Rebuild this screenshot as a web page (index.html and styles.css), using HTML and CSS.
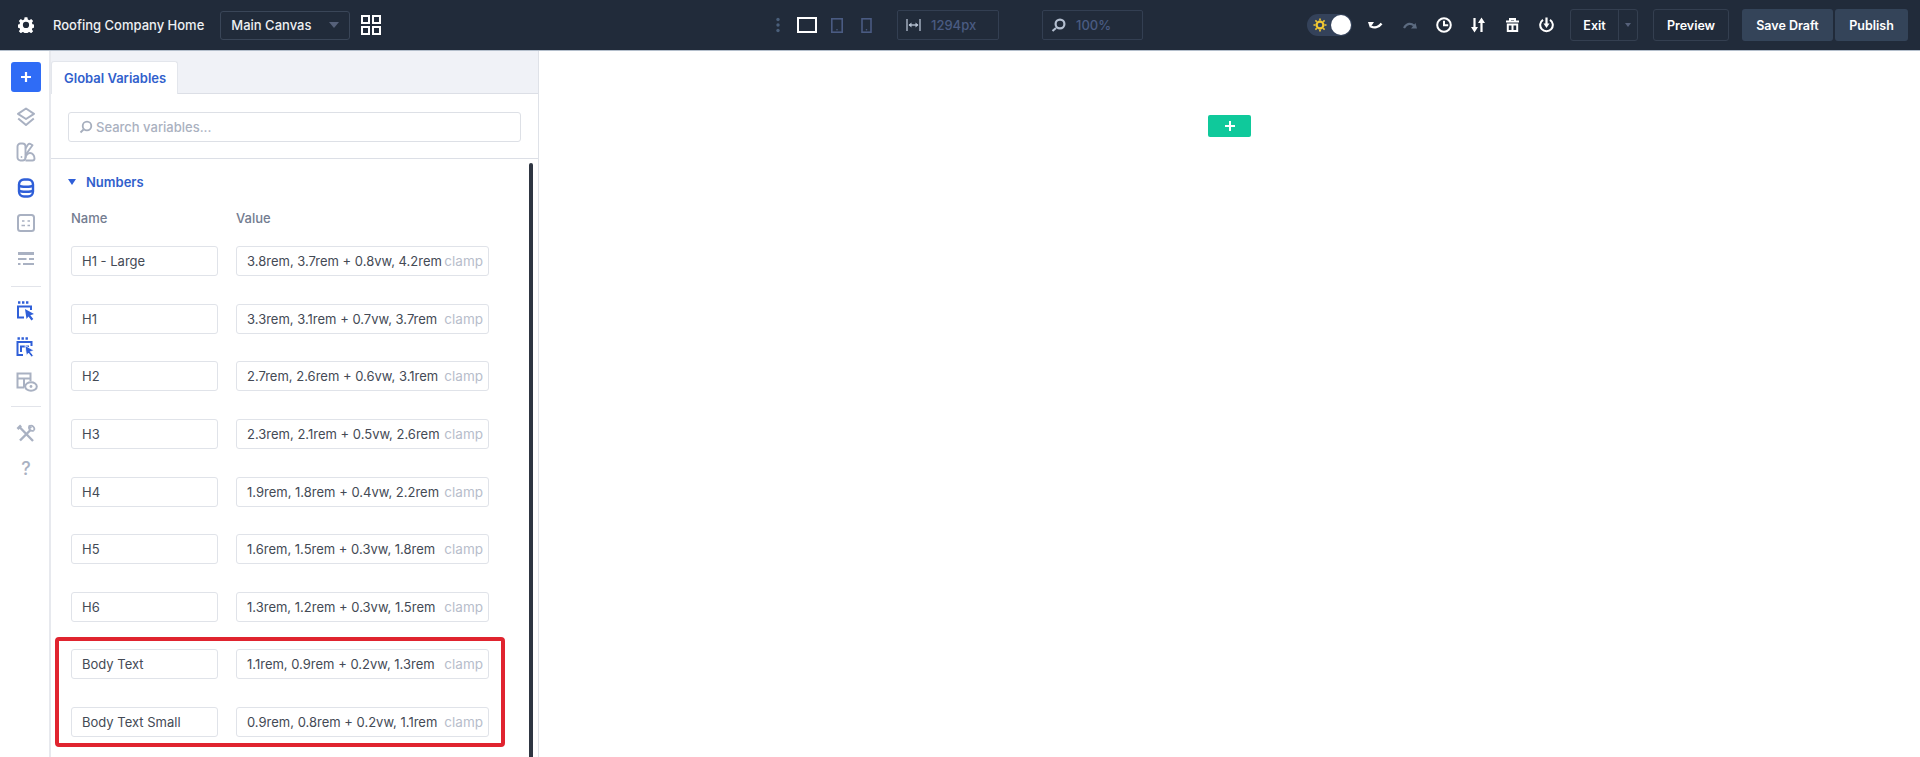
FILE: index.html
```html
<!DOCTYPE html>
<html lang="en">
<head>
<meta charset="utf-8">
<title>Global Variables</title>
<link rel="stylesheet" href="styles.css">
</head>
<body>
<header class="topbar">
  <div class="group group-left">
    <svg class="ic gear" viewBox="0 0 24 24"><path fill="#fff" fill-rule="evenodd" d="M10 1h4l.7 3.200 2.100.9 2.700-1.800 2.800 2.800-1.800 2.700.9 2.100 3.200.7v4l-3.200.7-.9 2.100 1.800 2.700-2.800 2.800-2.700-1.800-2.100.9-.7 3.200h-4l-.7-3.200-2.100-.9-2.700 1.800-2.800-2.800 1.800-2.700-.9-2.100-3.200-.7v-4l3.200-.7.9-2.100-1.800-2.700 2.800-2.800 2.700 1.800 2.100-.9zM12 7.500a4.500 4.500 0 1 0 0 9 4.500 4.500 0 0 0 0-9z" transform="translate(-.5 -.5) scale(1.040)"/></svg>
    <span class="title">Roofing Company Home</span>
    <div class="select"><span>Main Canvas</span><i class="caret"></i></div>
    <svg class="ic grid-ic" viewBox="0 0 20 20" fill="none" stroke="#fff" stroke-width="2"><rect x="1" y="1" width="7" height="7"/><rect x="12" y="1" width="7" height="7"/><rect x="1" y="12" width="7" height="7"/><rect x="12" y="12" width="7" height="7"/></svg>
  </div>
  <div class="group group-mid">
    <svg class="dots" viewBox="0 0 4 16" fill="#4a5f7a"><circle cx="2" cy="2.500" r="1.700"/><circle cx="2" cy="8" r="1.700"/><circle cx="2" cy="13.500" r="1.700"/></svg>
    <svg class="desktop" viewBox="0 0 20 16" fill="none" stroke="#fff" stroke-width="2"><path d="M1 15V1h18v14zM0 15.200h20"/></svg>
    <svg class="tablet" viewBox="0 0 12 15" fill="none" stroke="#4a5b82" stroke-width="1.600"><rect x=".8" y=".8" width="10.400" height="13.400"/><circle cx="6" cy="11.800" r=".8" fill="#4a5b82" stroke="none"/></svg>
    <svg class="phone" viewBox="0 0 11 15" fill="none" stroke="#4a5b82" stroke-width="1.600"><rect x="1" y=".8" width="9" height="13.400"/><circle cx="5.500" cy="11.800" r=".8" fill="#4a5b82" stroke="none"/></svg>
    <div class="field field-w">
      <svg class="fi" viewBox="0 0 15 14" fill="none" stroke="#b4bfd0" stroke-width="1.300"><path d="M1 1v12M14 1v12"/><path d="M3 7h9" stroke-width="1.400"/><path d="M2.500 7l3-2.500v5zM12.500 7l-3-2.500v5z" fill="#b4bfd0" stroke="none"/></svg>
      <span>1294px</span>
    </div>
    <div class="field field-z">
      <svg class="fi" viewBox="0 0 15 14" fill="none" stroke="#b4bfd0" stroke-width="2.200"><circle cx="9" cy="6" r="4.400"/><path d="M5 10L1.500 13"/></svg>
      <span>100%</span>
    </div>
  </div>
  <div class="group group-right">
    <div class="toggle">
      <svg class="sun" viewBox="0 0 14 14"><circle cx="7" cy="7" r="3.400" fill="none" stroke="#f3c933" stroke-width="2.200"/><path d="M7 .5v2M7 11.500v2M.5 7h2M11.500 7h2M2.400 2.400l1.400 1.400M10.200 10.200l1.400 1.400M2.400 11.600l1.400-1.400M10.200 3.800l1.400-1.400" stroke="#f3c933" stroke-width="1.600"/></svg>
      <i class="knob"></i>
    </div>
    <svg class="tool undo" viewBox="0 0 15 9" fill="none"><path d="M3 5.500c3 1.500 7.500 1.200 10.500-3" stroke="#fff" stroke-width="2.400"/><path d="M0 1h6L2 7z" fill="#fff"/></svg>
    <svg class="tool redo" viewBox="0 0 14 9" fill="none"><path d="M11 4.500C8 2 4 1.800 1 7" stroke="#5c6b80" stroke-width="2.200"/><path d="M14 7.500H8L12.500 2z" fill="#5c6b80"/></svg>
    <svg class="tool history" viewBox="0 0 16 16" fill="none" stroke="#fff" stroke-width="2"><circle cx="8" cy="8" r="6.800"/><path d="M8 3.800V8.300h4.200"/></svg>
    <svg class="tool sort" viewBox="0 0 14 16" fill="none" stroke="#fff" stroke-width="2.200"><path d="M3.500 1v11M10.500 4v11"/><path d="M0 10h7l-3.500 5.500zM7 6h7l-3.500-5.500z" fill="#fff" stroke="none"/></svg>
    <svg class="tool trash" viewBox="0 0 13 14" fill="none" stroke="#fff" stroke-width="2"><path d="M0 3.500h13M4 3V1h5v2"/><path d="M1.800 6.500h9.400v6.500H1.800zM6.500 6.500v6.500"/></svg>
    <svg class="tool power" viewBox="0 0 15 16" fill="none" stroke="#fff" stroke-width="2"><path d="M4 2.800a6.300 6.300 0 1 0 7 0"/><path d="M7.500 .5v7" stroke-width="2.200"/><path d="M4.500 6.500h6L7.500 11z" fill="#fff" stroke="none"/></svg>
    <div class="exit"><span class="exit-l">Exit</span><span class="exit-r"><i class="caret small"></i></span></div>
    <button class="btn btn-outline">Preview</button>
    <button class="btn btn-fill save">Save Draft</button>
    <button class="btn btn-fill publish">Publish</button>
  </div>
</header>

<div class="main">
  <nav class="rail">
    <button class="add"><svg viewBox="0 0 12 12" fill="none" stroke="#fff" stroke-width="2.200"><path d="M6 1v10M1 6h10"/></svg></button>
    <svg class="ri" viewBox="0 0 20 20" fill="none" stroke="#a9b1c2" stroke-width="2" stroke-linejoin="round"><path d="M10 1.500l8 5.300-8 5.200-8-5.200z"/><path d="M2.200 11.500l7.800 6.500 7.800-6.500"/></svg>
    <svg class="ri" viewBox="0 0 20 20" fill="none" stroke="#a9b1c2" stroke-width="1.900" stroke-linejoin="round"><rect x="1.500" y="1.500" width="8" height="17" rx="3"/><path d="M9.500 6.500l2.500-4c.8-1 2-1 3-.3l1.500 1-7 9.800"/><path d="M9.500 18.500h7c1.300 0 2-.7 2-2 0-2.800-2-5.500-4.500-5.500-2.200 0-4.500 2.800-4.500 5"/><circle cx="5.500" cy="15" r=".9" fill="#a9b1c2" stroke="none"/></svg>
    <svg class="ri" viewBox="0 0 20 20" fill="none" stroke="#2f5fd8" stroke-width="2.400"><rect x="3" y="1.500" width="14" height="17" rx="5"/><path d="M3 7.500c2 1.700 12 1.700 14 0M3 12.500c2 1.700 12 1.700 14 0"/></svg>
    <svg class="ri" viewBox="0 0 20 20" fill="none" stroke="#a9b1c2" stroke-width="2"><rect x="2" y="2" width="16" height="16" rx="2.500"/><path d="M6 8h2.500M11.500 8H14M5.500 12.500H9M11.500 12.500H14" stroke-width="1.600"/></svg>
    <svg class="ri" viewBox="0 0 20 20" fill="none" stroke="#a9b1c2" stroke-width="2.200"><path d="M2 4.500h16" stroke-width="3"/><path d="M2 10h8.500M13 10h5M2 15h2.500M7 15h11"/></svg>
    <hr class="sep sep-1">
    <svg class="ri" viewBox="0 0 20 20" fill="none" stroke="#2f5fd8" stroke-width="2"><path d="M2 1.500h2.400M6 1.500h2.400M10 1.500h2.400" stroke-width="2.400"/><path d="M15 9V5.500H2v11h6"/><path d="M9 8l9 5-3.700 1.200 3 3.800-1.900 1.500-2.900-3.900L10.500 18z" fill="#2f5fd8" stroke="none"/></svg>
    <svg class="ri" viewBox="0 0 20 20" fill="none" stroke="#2f5fd8" stroke-width="2"><path d="M1.500 1.500h2.400M5.500 1.500h2.400M9.500 1.500h2.400" stroke-width="2.400"/><path d="M15.500 9V5H1.500v13H7M13 9.500H5V15"/><path d="M9 8.500l9 5-3.700 1.200 3 3.800-1.900 1.500-2.900-3.900L10.500 18.500z" fill="#2f5fd8" stroke="#fff" stroke-width=".8"/></svg>
    <svg class="ri wide" viewBox="0 0 22 20" fill="none" stroke="#a9b1c2" stroke-width="2"><path d="M8 15.500H1.500V1.500h13V9M1.500 6.500h13M8 6.500v9"/><ellipse cx="15" cy="14.500" rx="5.800" ry="4.200"/><circle cx="15" cy="14.500" r="1.400" fill="#a9b1c2" stroke="none"/></svg>
    <hr class="sep sep-2">
    <svg class="ri" viewBox="0 0 20 20" fill="none" stroke="#a9b1c2" stroke-width="2.400"><path d="M3.500 3L17 17"/><path d="M1.500 5L5 1.500" stroke-width="2.600"/><path d="M4 16.500L14.500 6"/><path d="M17.800 6.500a3.300 3.300 0 0 1-4.500-4.300l2 2M13.500 2a3.300 3.300 0 0 1 4.500 4.300" stroke-width="1.800"/></svg>
    <span class="help">?</span>
  </nav>

  <section class="panel">
    <div class="tabs"><div class="tab">Global Variables</div></div>
    <div class="search-wrap">
      <div class="search">
        <svg viewBox="0 0 14 14" fill="none" stroke="#a6aebd" stroke-width="1.800"><circle cx="8" cy="6" r="4.300"/><path d="M4.500 9.500L1.500 12.500"/></svg>
        <span>Search variables...</span>
      </div>
    </div>
    <div class="vars">
      <div class="section-head"><i class="tri"></i><span>Numbers</span></div>
      <div class="cols"><span>Name</span><span>Value</span></div>
      <div class="rows">
        <div class="row"><div class="input">H1 - Large</div><div class="input val"><span>3.8rem, 3.7rem + 0.8vw, 4.2rem</span><em>clamp</em></div></div>
        <div class="row"><div class="input">H1</div><div class="input val"><span>3.3rem, 3.1rem + 0.7vw, 3.7rem</span><em>clamp</em></div></div>
        <div class="row"><div class="input">H2</div><div class="input val"><span>2.7rem, 2.6rem + 0.6vw, 3.1rem</span><em>clamp</em></div></div>
        <div class="row"><div class="input">H3</div><div class="input val"><span>2.3rem, 2.1rem + 0.5vw, 2.6rem</span><em>clamp</em></div></div>
        <div class="row"><div class="input">H4</div><div class="input val"><span>1.9rem, 1.8rem + 0.4vw, 2.2rem</span><em>clamp</em></div></div>
        <div class="row"><div class="input">H5</div><div class="input val"><span>1.6rem, 1.5rem + 0.3vw, 1.8rem</span><em>clamp</em></div></div>
        <div class="row"><div class="input">H6</div><div class="input val"><span>1.3rem, 1.2rem + 0.3vw, 1.5rem</span><em>clamp</em></div></div>
        <div class="row"><div class="input">Body Text</div><div class="input val"><span>1.1rem, 0.9rem + 0.2vw, 1.3rem</span><em>clamp</em></div></div>
        <div class="row"><div class="input">Body Text Small</div><div class="input val"><span>0.9rem, 0.8rem + 0.2vw, 1.1rem</span><em>clamp</em></div></div>
      </div>
    </div>
    <div class="scrollbar"></div>
    <div class="highlight"></div>
  </section>

  <main class="canvas">
    <button class="add-section"><svg viewBox="0 0 12 12" fill="none" stroke="#fff" stroke-width="2"><path d="M6 1v10M1 6h10"/></svg></button>
  </main>
</div>
</body>
</html>
```
FILE: styles.css
```css
* { box-sizing: border-box; }
html, body { margin: 0; height: 757px; overflow: hidden; background: #fff; }
body { font-family: Inter, "Liberation Sans", sans-serif; color: #444a55; }
svg { display: block; flex: none; }
button { font: inherit; border: 0; padding: 0; }

.topbar { height: 51px; background: #212b3a; border-bottom: 1px solid #b4bfcc; display: flex; align-items: center; color: #fff; }
.group { display: flex; align-items: center; }
.group-left { width: 776px; padding-left: 18px; }
.gear { width: 16px; height: 16px; }
.title { margin-left: 19px; font-size: 13px; font-weight: 500; color: #eef0f3; white-space: nowrap; }
.select { margin-left: 16px; width: 130px; height: 29px; border: 1px solid #3a4658; border-radius: 3px; display: flex; align-items: center; justify-content: space-between; padding: 0 10px; font-size: 13px; font-weight: 500; color: #eef0f3; }
.caret { width: 0; height: 0; border-left: 5px solid transparent; border-right: 5px solid transparent; border-top: 6px solid #56617a; }
.caret.small { border-left-width: 3px; border-right-width: 3px; border-top-width: 4px; }
.grid-ic { width: 20px; height: 20px; margin-left: 11px; }

.group-mid { width: 531px; }
.dots { width: 4px; height: 16px; margin-right: 17px; }
.desktop { width: 20px; height: 16px; margin-right: 14px; }
.tablet { width: 12px; height: 15px; margin-right: 18px; }
.phone { width: 11px; height: 15px; margin-right: 25px; }
.field { height: 30px; border: 1px solid #333f52; border-radius: 2px; display: flex; align-items: center; padding-left: 8px; font-size: 13px; font-weight: 500; color: #4a5b82; }
.field-w { width: 102px; margin-right: 43px; }
.field-z { width: 101px; }
.fi { width: 15px; height: 14px; margin-right: 10px; }

.group-right { flex: 1; }
.toggle { width: 45px; height: 22px; border-radius: 11px; background: #34425a; position: relative; display: flex; align-items: center; padding-left: 6px; }
.sun { width: 14px; height: 14px; }
.knob { position: absolute; right: 1px; top: 1px; width: 20px; height: 20px; border-radius: 50%; background: #fff; }
.undo { width: 15px; height: 9px; margin-left: 16px; }
.redo { width: 14px; height: 9px; margin-left: 20px; }
.history { width: 16px; height: 16px; margin-left: 19px; }
.sort { width: 14px; height: 16px; margin-left: 19px; }
.trash { width: 13px; height: 14px; margin-left: 21px; }
.power { width: 15px; height: 16px; margin-left: 20px; }
.exit { margin-left: 16px; width: 68px; height: 32px; border: 1px solid #343f50; border-radius: 3px; display: flex; font-size: 12.500px; font-weight: 600; color: #fff; }
.exit-l { width: 48px; display: flex; align-items: center; justify-content: center; border-right: 1px solid #343f50; }
.exit-r { flex: 1; display: flex; align-items: center; justify-content: center; }
.btn { height: 32px; border-radius: 3px; font-size: 12.500px; font-weight: 600; color: #fff; }
.btn-outline { margin-left: 15px; width: 76px; background: transparent; border: 1px solid #343f50; }
.btn-fill { background: #344459; }
.save { margin-left: 13px; width: 91px; }
.publish { margin-left: 2px; width: 73px; }

.main { display: flex; height: 706px; }
.rail { width: 51px; flex: none; border-right: 2px solid #e7e9ee; display: flex; flex-direction: column; align-items: center; padding: 11px 0 0 3px; }
.add { width: 30px; height: 30px; border-radius: 3px; background: #2f6cf6; display: flex; align-items: center; justify-content: center; margin-bottom: 14.500px; flex: none; }
.add svg { width: 12px; height: 12px; }
.ri { width: 20px; height: 20px; margin-bottom: 15.500px; }
.ri.wide { width: 22px; margin-left: 2px; }
.sep { width: 30px; height: 0; border: 0; border-top: 1px solid #e2e4ea; margin: 1.500px 0 14.500px; }
.sep-2 { margin: -2px 0 17px; }
.help { font-size: 18px; font-weight: 500; line-height: 20px; color: #a9b1c2; }

.panel { width: 488px; flex: none; border-right: 1px solid #dfe2e8; position: relative; overflow: hidden; }
.tabs { height: 43px; background: #f0f2f7; border-bottom: 1px solid #dcdfe6; padding-top: 10px; }
.tab { width: 127px; height: 33px; background: #fff; border: 1px solid #e3e6ec; border-bottom: 0; border-radius: 3px 3px 0 0; color: #3160cc; font-size: 13px; font-weight: 600; display: flex; align-items: center; padding-left: 12px; }
.search-wrap { height: 65px; padding: 18px 17px 0; border-bottom: 1px solid #dcdfe6; }
.search { height: 30px; width: 453px; border: 1px solid #dde0e6; border-radius: 3px; display: flex; align-items: center; padding-left: 10px; gap: 3px; color: #aab1bf; font-size: 13px; font-weight: 500; }
.search svg { width: 14px; height: 14px; }
.vars { padding: 15px 0 0 20px; }
.section-head { display: flex; align-items: center; color: #3160cc; font-size: 13px; font-weight: 600; line-height: 16px; margin-left: -3px; }
.tri { width: 0; height: 0; border-left: 4.500px solid transparent; border-right: 4.500px solid transparent; border-top: 6px solid #2f5fd8; margin-right: 10px; }
.cols { display: grid; grid-template-columns: 165px 253px; margin-top: 20px; font-size: 13px; font-weight: 500; color: #737c90; line-height: 16px; }
.rows { display: flex; flex-direction: column; gap: 27.650px; margin-top: 20px; }
.row { display: grid; grid-template-columns: 147px 253px; column-gap: 18px; }
.input { height: 30px; border: 1px solid #e0e3e9; border-radius: 3px; display: flex; align-items: center; padding: 0 5px 0 10px; font-size: 13px; color: #444a55; background: #fff; white-space: nowrap; }
.val { justify-content: space-between; }
.val em { font-style: normal; font-size: 13.500px; color: #b7bdcb; }
.scrollbar { position: absolute; left: 478px; top: 112px; bottom: 0; width: 4px; background: #2f3642; border-radius: 2px 2px 0 0; }
.highlight { position: absolute; left: 4px; top: 586px; width: 450px; height: 110px; border: 4px solid #e0242f; border-radius: 4px; }

.canvas { flex: 1; background: #fff; padding: 64px 0 0 669px; }
.add-section { width: 43px; height: 22px; border-radius: 2px; background: #0fc99b; display: flex; align-items: center; justify-content: center; }
.add-section svg { width: 12px; height: 12px; }
```
